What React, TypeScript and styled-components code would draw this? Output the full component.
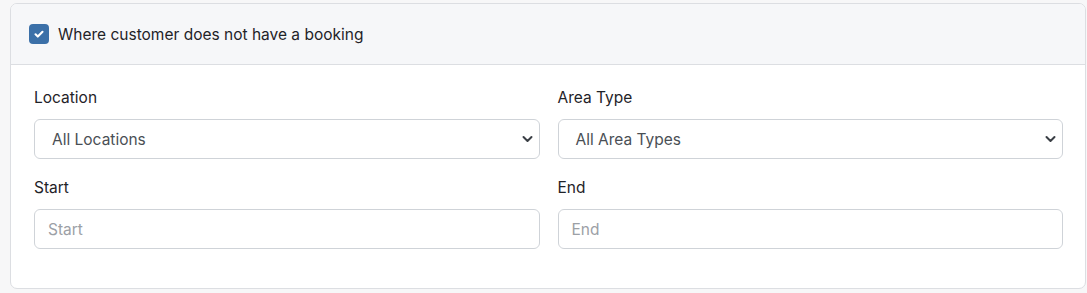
import React from "react";
import styled, { createGlobalStyle } from "styled-components";

const GlobalStyle = createGlobalStyle`
    *, *::before, *::after {
        box-sizing: border-box;
    }
    body {
        margin: 0;
        background: #f7f7f8;
        font-family: Inter, "Noto Sans", sans-serif;
        color: #212529;
    }
`

const Page = styled.div`
    padding: 3px 1px 4px 10px;
`

const Card = styled.section`
    background: #ffffff;
    border: 1px solid #dcdee2;
    border-radius: 7px;
    overflow: hidden;
`

const CardHeader = styled.header`
    height: 61px;
    display: flex;
    align-items: center;
    gap: 9px;
    padding: 0 18px;
    background: #f6f7f9;
    border-bottom: 1px solid #dcdee2;
`

const CheckBox = styled.span`
    width: 20px;
    height: 20px;
    border-radius: 4px;
    background: #3b70a8;
    display: flex;
    align-items: center;
    justify-content: center;
`

const HeaderLabel = styled.span`
    font-size: 15.5px;
    color: #1f2328;
`

const CardBody = styled.div`
    padding: 23px 22px 39px 23px;
    display: grid;
    grid-template-columns: 1fr 1fr;
    column-gap: 18px;
    row-gap: 19px;
`

const Field = styled.div`
    display: flex;
    flex-direction: column;
`

const Label = styled.label`
    font-size: 15.5px;
    line-height: 20px;
    margin-bottom: 11px;
    color: #1f2328;
`

const Control = styled.div<{ $placeholder?: boolean }>`
    position: relative;
    height: 40px;
    border: 1px solid #cfd3d8;
    border-radius: 6px;
    background: #fff;
    display: flex;
    align-items: center;
    padding: 0 ${(p) => (p.$placeholder ? "13px" : "17px")};
    font-size: 15.5px;
    color: ${(p) => (p.$placeholder ? "#9ca0a6" : "#4a4f55")};
`

const Chevron = styled.svg`
    position: absolute;
    right: 6px;
    top: 14px;
`

const SelectBox = ({ value }: { value: string }) => (
    <Control>
        {value}
        <Chevron width="11" height="10" viewBox="0 0 11 10">
            <path d="M1.5 3l4 4 4-4" fill="none" stroke="#3a3f45" strokeWidth="2" strokeLinecap="round" strokeLinejoin="round" />
        </Chevron>
    </Control>
)

export default function App() {
    return (
        <Page>
            <GlobalStyle />
            <Card>
                <CardHeader>
                    <CheckBox>
                        <svg width="12" height="12" viewBox="0 0 12 12">
                            <path d="M2.5 6.3l2.3 2.3 4.7-4.8" fill="none" stroke="#fff" strokeWidth="2.1" strokeLinecap="round" strokeLinejoin="round" />
                        </svg>
                    </CheckBox>
                    <HeaderLabel>Where customer does not have a booking</HeaderLabel>
                </CardHeader>
                <CardBody>
                    <Field>
                        <Label>Location</Label>
                        <SelectBox value="All Locations" />
                    </Field>
                    <Field>
                        <Label>Area Type</Label>
                        <SelectBox value="All Area Types" />
                    </Field>
                    <Field>
                        <Label>Start</Label>
                        <Control $placeholder>Start</Control>
                    </Field>
                    <Field>
                        <Label>End</Label>
                        <Control $placeholder>End</Control>
                    </Field>
                </CardBody>
            </Card>
        </Page>
    )
}
